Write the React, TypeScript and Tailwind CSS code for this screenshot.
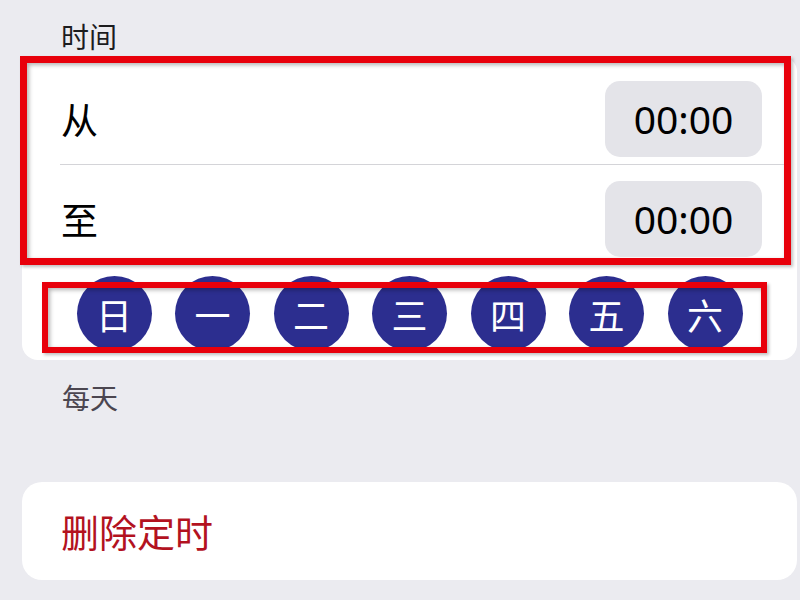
import React from "react";

const cjk = "font-['Noto_Sans_CJK_SC','Noto_Sans',sans-serif]";

function TimeRow({ label, top, bottom }: { label: string; top: string; bottom: string }) {
  return (
    <div className={`flex items-center justify-between pl-[34px] pr-[22px] ${top} ${bottom}`}>
      <span className="text-[37px] leading-[40px] text-black">{label}</span>
      <div className="flex h-[76px] w-[157px] items-center justify-center rounded-[15px] bg-[#e4e4e9]">
        <span className="font-['Noto_Sans',sans-serif] text-[39px] leading-[40px] text-black">00:00</span>
      </div>
    </div>
  );
}

export default function App() {
  const days = ["日", "一", "二", "三", "四", "五", "六"];
  return (
    <div className={`h-[600px] w-[800px] overflow-hidden bg-[#ebebf0] ${cjk}`}>
      <div className="pl-[61px] pt-[20px] text-[28px] leading-[32px] text-[#1c1c1e]">时间</div>
      <div className="relative ml-[22px] mt-[4px] w-[775px] rounded-[16px] bg-white">
        <div className="-ml-[2px] w-[771px] border-[7px] border-[#e8000b] shadow-[inset_2px_2px_4px_rgba(0,0,0,0.3),2px_2px_3px_rgba(0,0,0,0.25)]">
          <TimeRow label="从" top="pt-[18px]" bottom="pb-[7px]" />
          <div className="ml-[33px] h-px bg-[#d4d4d8]" />
          <TimeRow label="至" top="pt-[16px]" bottom="pb-[1px]" />
        </div>
        <div className="relative flex h-[95px] items-start justify-center gap-[23.5px] pt-[11px]">
          {days.map((d) => (
            <div
              key={d}
              className="flex h-[75px] w-[75px] items-center justify-center rounded-full bg-[#2c2e8f] text-[36px] leading-[40px] text-white"
            >
              {d}
            </div>
          ))}
          <div className="pointer-events-none absolute left-[20px] top-[17px] h-[71px] w-[725px] border-[6px] border-[#e8000b] shadow-[inset_2px_2px_4px_rgba(0,0,0,0.3),2px_2px_3px_rgba(0,0,0,0.25)]" />
        </div>
      </div>
      <div className="mt-[21px] pl-[62px] text-[28px] leading-[32px] text-[#4b4650]">每天</div>
      <div className="ml-[22px] mt-[69px] flex h-[98px] w-[775px] items-center rounded-[20px] bg-white pl-[39px]">
        <span className="text-[38px] leading-[42px] text-[#b3121f]">删除定时</span>
      </div>
    </div>
  );
}
